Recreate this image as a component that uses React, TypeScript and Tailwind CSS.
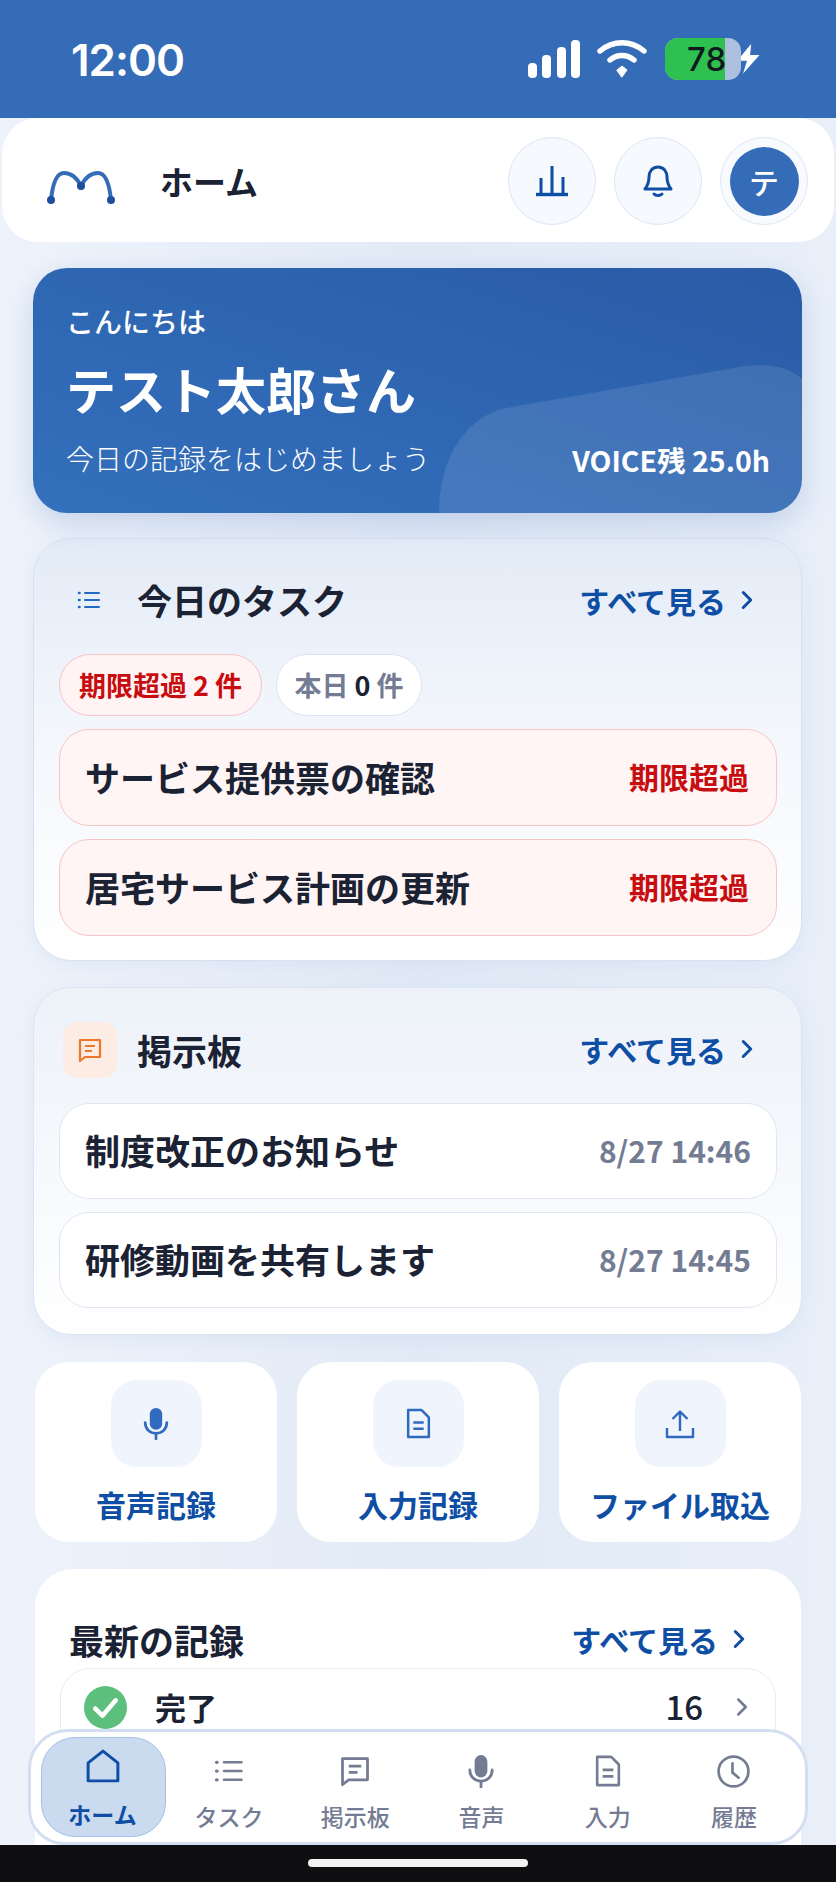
import React from 'react';
import { ChevronRight } from 'lucide-react';

const tasks = ['サービス提供票の確認', '居宅サービス計画の更新'];
const posts = [
  { title: '制度改正のお知らせ', time: '8/27 14:46' },
  { title: '研修動画を共有します', time: '8/27 14:45' },
];

const ListIcon = ({ className }: { className?: string }) => (
  <svg viewBox="0 0 24 24" fill="none" stroke="currentColor" strokeWidth="2" strokeLinecap="round" className={className}>
    <path d="M8 5h14M8 12h14M8 19h14" />
    <path d="M2 5h.5M2 12h.5M2 19h.5" strokeWidth="2.6" />
  </svg>
);

const ChatIcon = ({ className }: { className?: string }) => (
  <svg viewBox="0 0 24 24" fill="none" stroke="currentColor" strokeWidth="2.2" strokeLinejoin="round" className={className}>
    <path d="M2 2h20v17H7l-5 4z" />
    <path d="M7 8h10M7 13h7" />
  </svg>
);

const MicIcon = ({ className }: { className?: string }) => (
  <svg viewBox="0 0 24 32" fill="none" stroke="currentColor" strokeWidth="2.6" strokeLinecap="round" className={className}>
    <rect x="6" y="1" width="12" height="21" rx="6" fill="currentColor" stroke="none" />
    <path d="M1.5 15c0 6.5 4.5 10.5 10.5 10.5S22.500 21.500 22.500 15" />
    <path d="M12 26v5" />
  </svg>
);

const DocIcon = ({ className }: { className?: string }) => (
  <svg viewBox="0 0 24 30" fill="none" stroke="currentColor" strokeWidth="2.4" strokeLinejoin="round" className={className}>
    <path d="M2 2h13l7 7v19H2z" />
    <path d="M7 14h10M7 20h10" />
  </svg>
);

const UploadIcon = ({ className }: { className?: string }) => (
  <svg viewBox="0 0 30 30" fill="none" stroke="currentColor" strokeWidth="2.4" strokeLinejoin="round" className={className}>
    <path d="M2 19v9h26v-9" />
    <path d="M15 22V3M7.500 10 15 2.500 22.500 10" />
  </svg>
);

const ClockIcon = ({ className }: { className?: string }) => (
  <svg viewBox="0 0 32 32" fill="none" stroke="currentColor" strokeWidth="2.6" strokeLinecap="round" className={className}>
    <circle cx="16" cy="16" r="14.500" />
    <path d="M15 8v9l6 5" />
  </svg>
);

const HomeIcon = ({ className }: { className?: string }) => (
  <svg viewBox="0 0 32 32" fill="none" stroke="currentColor" strokeWidth="2.8" strokeLinejoin="round" className={className}>
    <path d="M2 13 16 2l14 11v17H2z" />
  </svg>
);

const SeeAll = () => (
  <div className="flex items-center text-[#0f4ea5]">
    <span className="text-[30px] leading-none font-semibold">すべて見る</span>
    <ChevronRight className="ml-[6px] h-[30px] w-[30px]" strokeWidth={2.4} />
  </div>
);

const navItems = [
  { label: 'タスク', icon: <ListIcon className="h-[30px] w-[30px]" /> },
  { label: '掲示板', icon: <ChatIcon className="h-[32px] w-[30px]" /> },
  { label: '音声', icon: <MicIcon className="h-[34px] w-[28px]" /> },
  { label: '入力', icon: <DocIcon className="h-[34px] w-[26px]" /> },
  { label: '履歴', icon: <ClockIcon className="h-[33px] w-[33px]" /> },
];

const quick = [
  { label: '音声記録', icon: <MicIcon className="h-[33px] w-[28px]" /> },
  { label: '入力記録', icon: <DocIcon className="h-[31px] w-[25px]" /> },
  { label: 'ファイル取込', icon: <UploadIcon className="h-[30px] w-[30px]" /> },
];

export default function App() {
  return (
    <div className="relative h-[1882px] w-[836px] overflow-hidden bg-gradient-to-r from-[#eef3fb] via-[#e2eaf6] to-[#e8eff9] font-['Noto_Sans_CJK_JP',sans-serif] text-[#1a2233]">
      {/* status bar */}
      <div className="flex h-[118px] items-center justify-between bg-[#356cb7] pr-[72px] pl-[71px] text-white">
        <span className="mb-[-2px] font-['Inter',sans-serif] text-[44px] leading-none font-semibold tracking-[-1px]">12:00</span>
        <div className="flex items-center">
          <svg viewBox="0 0 52 38" className="h-[38px] w-[52px]" fill="white">
            <rect x="0" y="23" width="9" height="15" rx="4" />
            <rect x="14" y="15" width="9" height="23" rx="4" />
            <rect x="29" y="7" width="9" height="31" rx="4" />
            <rect x="43" y="0" width="9" height="38" rx="4" />
          </svg>
          <svg viewBox="0 0 50 38" className="ml-[17px] h-[38px] w-[50px]" fill="none" stroke="white" strokeWidth="5.500" strokeLinecap="round">
            <path d="M3 11C16 0 34 0 47 11" />
            <path d="M13 20c7-6 17-6 24 0" />
            <path d="M20 30l5-4 5 4-5 7z" fill="white" strokeWidth="1" strokeLinejoin="round" />
          </svg>
          <div className="relative ml-[18px] h-[42px] w-[76px] overflow-hidden rounded-[13px] bg-[#aec0df]">
            <div className="h-full w-[60px] bg-[#2fc14f]" />
            <span className="absolute top-0 left-[22px] flex h-full items-center font-['Inter',sans-serif] text-[33px] leading-none font-medium text-[#0f1a20]">78</span>
          </div>
          <svg viewBox="0 0 26 32" className="ml-[-8px] h-[36px] w-[31px]" fill="white" stroke="#356cb7" strokeWidth="1">
            <path d="M16 1 2 18h9L7 31l17-19h-9z" />
          </svg>
        </div>
      </div>

      {/* header */}
      <header className="mx-[2px] flex h-[124px] items-center rounded-[36px] bg-white pr-[26px] pl-[45px]">
        <svg viewBox="0 0 68 34" className="mt-[14px] h-[34px] w-[68px]" fill="none">
          <path d="M4 30C6 10 11 3 17 3c7 0 13 5 17 13 4-8 10-13 17-13 6 0 11 7 13 27" stroke="#356cb7" strokeWidth="4" strokeLinecap="round" />
          <circle cx="4" cy="30" r="4" fill="#1f4f9c" />
          <circle cx="34" cy="16" r="4" fill="#1f4f9c" />
          <circle cx="64" cy="30" r="4" fill="#1f4f9c" />
        </svg>
        <h1 className="mt-[2px] ml-[45px] text-[33px] leading-none font-bold">ホーム</h1>
        <div className="mt-[2px] ml-auto flex items-center gap-[18px]">
          <button className="flex h-[88px] w-[88px] items-center justify-center rounded-full border border-[#dde6f4] bg-[#f6f9fe] text-[#0f4ea5]">
            <svg viewBox="0 0 34 32" className="h-[32px] w-[34px]" fill="none" stroke="currentColor" strokeWidth="3">
              <path d="M6 29V13M17 29V1M28 29V12" />
              <path d="M1 29.500h32" strokeWidth="3.400" />
            </svg>
          </button>
          <button className="flex h-[88px] w-[88px] items-center justify-center rounded-full border border-[#dde6f4] bg-[#f6f9fe] text-[#0f4ea5]">
            <svg viewBox="0 0 30 32" className="h-[32px] w-[30px]" fill="none" stroke="currentColor" strokeWidth="3" strokeLinecap="round" strokeLinejoin="round">
              <path d="M15 2c-6 0-9 5-9 10 0 5-1 8-4 12h26c-3-4-4-7-4-12 0-5-3-10-9-10z" />
              <path d="M11 29c2 2 6 2 8 0" />
            </svg>
          </button>
          <div className="flex h-[88px] w-[88px] items-center justify-center rounded-full border border-[#dde6f4] bg-[#f8fafe]">
            <div className="flex h-[69px] w-[69px] items-center justify-center rounded-full bg-[#356cb7] text-[30px] leading-none font-medium text-white">テ</div>
          </div>
        </div>
      </header>

      <main className="pr-[34px] pl-[33px]">
        {/* greeting */}
        <section className="relative mt-[26px] h-[245px] overflow-hidden rounded-[34px] bg-gradient-to-tr from-[#3470bc] via-[#2e66b2] to-[#2a5ba6] pt-[39px] pl-[33px] text-white shadow-[0_10px_28px_rgba(70,110,180,0.22)]">
          <svg viewBox="0 0 363 148" className="absolute right-0 bottom-0 h-[148px] w-[363px]" fill="white" fillOpacity="0.1">
            <path d="M0 148C0 100 20 58 62 44L300 2c25-4 48-2 63 12v134z" />
          </svg>
          <p className="relative text-[28px] leading-none font-medium">こんにちは</p>
          <p className="relative mt-[28px] text-[50px] leading-none font-bold">テスト太郎さん</p>
          <p className="relative mt-[31px] text-[28px] leading-none font-light">今日の記録をはじめましょう</p>
          <p className="absolute right-[32px] bottom-[39px] text-[28.5px] leading-none font-semibold">VOICE残 25.0h</p>
        </section>

        {/* tasks */}
        <section className="mt-[25px] rounded-[38px] border border-[#d7e1f0] bg-gradient-to-b from-[#e3ebf6] via-[#f3f7fc] via-45% to-white pt-[30px] pr-[24px] pb-[24px] pl-[25px] shadow-[0_4px_20px_rgba(90,130,190,0.08)]">
          <div className="flex h-[64px] items-center justify-between pr-[15px] pb-[3px]">
            <div className="flex items-center">
              <ListIcon className="ml-[18px] h-[24px] w-[24px] text-[#2468c8]" />
              <h2 className="ml-[36px] text-[35px] leading-none font-semibold">今日のタスク</h2>
            </div>
            <SeeAll />
          </div>
          <div className="mt-[21px] flex gap-[14px]">
            <span className="flex h-[62px] w-[203px] items-center justify-center rounded-full border border-[#f6c2c4] bg-[#fff3f3] pb-[1px] text-[27px] leading-none font-semibold text-[#c80d10]">期限超過 2 件</span>
            <span className="flex h-[62px] w-[146px] items-center justify-center rounded-full border border-[#dde4f1] bg-white pb-[1px] text-[27px] leading-none font-semibold text-[#747c94]">
              本日&nbsp;<span className="font-bold text-[#1a2233]">0</span>&nbsp;件
            </span>
          </div>
          <div className="mt-[13px] flex flex-col gap-[13px]">
            {tasks.map((t) => (
              <div key={t} className="flex h-[97px] items-center justify-between rounded-[30px] border border-[#f6c5c7] bg-[#fff5f5] pr-[27px] pb-[3px] pl-[25px]">
                <span className="text-[35px] leading-none font-semibold">{t}</span>
                <span className="text-[30px] leading-none font-semibold text-[#c80d10]">期限超過</span>
              </div>
            ))}
          </div>
        </section>

        {/* board */}
        <section className="mt-[26px] rounded-[38px] border border-[#dbe4f2] bg-gradient-to-b from-[#edf2f9] to-white pt-[34px] pr-[24px] pb-[26px] pl-[25px] shadow-[0_4px_20px_rgba(90,130,190,0.08)]">
          <div className="flex h-[56px] items-center justify-between pr-[15px]">
            <div className="flex items-center">
              <div className="ml-[4px] flex h-[56px] w-[54px] items-center justify-center rounded-[14px] bg-[#fcece3]">
                <ChatIcon className="h-[24px] w-[24px] text-[#f0752d]" />
              </div>
              <h2 className="mb-[2px] ml-[20px] text-[35px] leading-none font-semibold">掲示板</h2>
            </div>
            <div className="mb-[3px]">
              <SeeAll />
            </div>
          </div>
          <div className="mt-[25px] flex flex-col gap-[13px]">
            {posts.map((p) => (
              <div key={p.title} className="flex h-[96px] items-center justify-between rounded-[30px] border border-[#e0e7f3] bg-white pr-[25px] pb-[3px] pl-[25px]">
                <span className="text-[35px] leading-none font-semibold">{p.title}</span>
                <span className="text-[30px] leading-none font-semibold text-[#747c94]">{p.time}</span>
              </div>
            ))}
          </div>
        </section>

        {/* quick actions */}
        <section className="mt-[27px] grid h-[180px] grid-cols-3 gap-[20px] pr-[1px] pl-[2px]">
          {quick.map((q) => (
            <button key={q.label} className="flex flex-col items-center rounded-[34px] bg-white pt-[18px] text-[#0f4ea5]">
              <span className="flex h-[87px] w-[91px] items-center justify-center rounded-[26px] bg-[#eff4fd] text-[#2f6abf]">{q.icon}</span>
              <span className="mt-[22px] text-[30px] leading-none font-semibold">{q.label}</span>
            </button>
          ))}
        </section>

        {/* latest */}
        <section className="mt-[27px] mr-[1px] ml-[2px] h-[400px] rounded-[38px] bg-white px-[25px] pt-[52px]">
          <div className="flex items-center justify-between pr-[22px]">
            <h2 className="ml-[9px] pt-[1px] text-[35px] leading-none font-semibold">最新の記録</h2>
            <SeeAll />
          </div>
          <div className="mt-[11px] flex h-[97px] items-center rounded-[30px] border border-[#e6ecf6] bg-white pr-[18px] pl-[23px]">
            <svg viewBox="0 0 42 42" className="mt-[-18px] h-[43px] w-[43px]">
              <circle cx="21" cy="21" r="21" fill="#5cc07c" />
              <path d="M11 22l7 7 13-15" fill="none" stroke="white" strokeWidth="4.500" strokeLinecap="round" strokeLinejoin="round" />
            </svg>
            <span className="mt-[-20px] ml-[28px] text-[31px] leading-none font-semibold">完了</span>
            <span className="mt-[-20px] ml-auto text-[33px] leading-none font-medium">16</span>
            <ChevronRight className="mt-[-20px] ml-[24px] h-[30px] w-[30px] text-[#747c94]" strokeWidth={2} />
          </div>
        </section>
      </main>

      {/* bottom nav and home bar */}
      <div className="absolute inset-x-0 bottom-0">
        <nav className="mx-[28px] flex h-[116px] items-stretch rounded-t-[40px] rounded-b-[36px] border-[3px] border-[#d3dff1] bg-white py-[5px] pr-[8px] pl-[10px]">
          <div className="flex w-[125px] flex-col items-center rounded-[34px] border border-[#a3c0e8] bg-[#cadbef] pt-[11px] pr-[2px] text-[#0f4ea5]">
            <HomeIcon className="h-[34px] w-[34px]" />
            <span className="mt-[20px] text-[23px] leading-none font-bold">ホーム</span>
          </div>
          <div className="grid flex-1 grid-cols-5">
            {navItems.map((n) => (
              <div key={n.label} className="flex flex-col items-center pt-[16px] text-[#747c94]">
                <span className="flex h-[36px] items-center">{n.icon}</span>
                <span className="mt-[16px] text-[23px] leading-none font-medium">{n.label}</span>
              </div>
            ))}
          </div>
        </nav>
        <div className="flex h-[37px] items-center justify-center bg-[#0f0f11]">
          <div className="mt-[-2px] h-[8px] w-[220px] rounded-full bg-[#f2f2f2]" />
        </div>
      </div>
    </div>
  );
}
